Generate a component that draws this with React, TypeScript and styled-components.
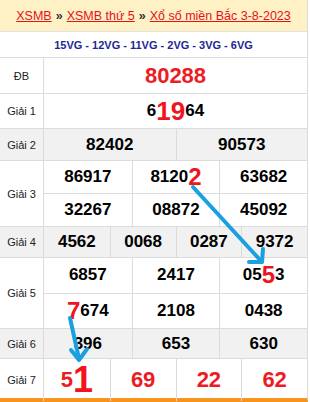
import React from "react";
import styled, { createGlobalStyle } from "styled-components";

const Global = createGlobalStyle`
  html, body { margin: 0; padding: 0; background: #fff; }
  body { font-family: "Liberation Sans", Arial, sans-serif; }
  * { box-sizing: border-box; }
`;

const Board = styled.div`
  position: relative;
  width: 308px;
  border-right: 1px solid #dcdcdc;
  border-bottom: 4px solid #f7941d;
`;

const Title = styled.div`
  height: 32px;
  background: #fdf1c5;
  border-bottom: 1px solid #e2e2e2;
  display: flex;
  align-items: center;
  justify-content: center;
  font-size: 12.5px;
  white-space: nowrap;
  color: #222;
`;

const Crumb = styled.a`
  color: #e8101c;
  text-decoration: underline;
  cursor: pointer;
`;

const Sep = styled.span`
  font-weight: bold;
  color: #333;
  margin: 0 4px;
`;

const VgRow = styled.div`
  height: 26px;
  border-bottom: 1px solid #dcdcdc;
  display: flex;
  align-items: center;
  justify-content: center;
  font-size: 11px;
  font-weight: bold;
  color: #1c2796;
`;

const Row = styled.div<{ $h: number; $shade?: boolean; $last?: boolean }>`
  display: grid;
  grid-template-columns: 44px 1fr;
  height: ${(p) => p.$h}px;
  background: ${(p) => (p.$shade ? "#f1f1f1" : "#fff")};
  border-bottom: ${(p) => (p.$last ? "none" : "1px solid #dcdcdc")};
`;

const Label = styled.div`
  border-right: 1px solid #dcdcdc;
  display: flex;
  align-items: center;
  justify-content: center;
  font-size: 11px;
  color: #222;
`;

const Stack = styled.div`
  display: flex;
  flex-direction: column;
`;

const Line = styled.div<{ $cols: number }>`
  flex: 1;
  display: grid;
  grid-template-columns: repeat(${(p) => p.$cols}, 1fr);
  & + & {
    border-top: 1px solid #dcdcdc;
  }
`;

const Cell = styled.div<{ $size?: number; $red?: boolean }>`
  display: flex;
  align-items: center;
  justify-content: center;
  font-weight: bold;
  font-size: ${(p) => p.$size ?? 17}px;
  color: ${(p) => (p.$red ? "#ec1c24" : "#000")};
  white-space: nowrap;
  & + & {
    border-left: 1px solid #dcdcdc;
  }
`;

const Hi = styled.span<{ $size: number }>`
  color: #f0141e;
  font-size: ${(p) => p.$size}px;
`;

const Overlay = styled.svg`
  position: absolute;
  left: 0;
  top: 0;
  pointer-events: none;
`;

export default function App() {
  return (
    <>
      <Global />
      <Board>
        <Title>
          <Crumb>XSMB</Crumb>
          <Sep>»</Sep>
          <Crumb>XSMB thứ 5</Crumb>
          <Sep>»</Sep>
          <Crumb>Xổ số miền Bắc 3-8-2023</Crumb>
        </Title>
        <VgRow>15VG - 12VG - 11VG - 2VG - 3VG - 6VG</VgRow>

        <Row $h={36}>
          <Label>ĐB</Label>
          <Line $cols={1}>
            <Cell $size={22} $red>80288</Cell>
          </Line>
        </Row>

        <Row $h={35}>
          <Label>Giải 1</Label>
          <Line $cols={1}>
            <Cell>
              6<Hi $size={26}>19</Hi>64
            </Cell>
          </Line>
        </Row>

        <Row $h={32} $shade>
          <Label>Giải 2</Label>
          <Line $cols={2}>
            <Cell>82402</Cell>
            <Cell>90573</Cell>
          </Line>
        </Row>

        <Row $h={66}>
          <Label>Giải 3</Label>
          <Stack>
            <Line $cols={3}>
              <Cell>86917</Cell>
              <Cell>
                8120<Hi $size={24}>2</Hi>
              </Cell>
              <Cell>63682</Cell>
            </Line>
            <Line $cols={3}>
              <Cell>32267</Cell>
              <Cell>08872</Cell>
              <Cell>45092</Cell>
            </Line>
          </Stack>
        </Row>

        <Row $h={31} $shade>
          <Label>Giải 4</Label>
          <Line $cols={4}>
            <Cell>4562</Cell>
            <Cell>0068</Cell>
            <Cell>0287</Cell>
            <Cell>9372</Cell>
          </Line>
        </Row>

        <Row $h={71}>
          <Label>Giải 5</Label>
          <Stack>
            <Line $cols={3}>
              <Cell>6857</Cell>
              <Cell>2417</Cell>
              <Cell>
                05<Hi $size={24}>5</Hi>3
              </Cell>
            </Line>
            <Line $cols={3}>
              <Cell>
                <Hi $size={24}>7</Hi>674
              </Cell>
              <Cell>2108</Cell>
              <Cell>0438</Cell>
            </Line>
          </Stack>
        </Row>

        <Row $h={30} $shade>
          <Label>Giải 6</Label>
          <Line $cols={3}>
            <Cell>396</Cell>
            <Cell>653</Cell>
            <Cell>630</Cell>
          </Line>
        </Row>

        <Row $h={39} $last>
          <Label>Giải 7</Label>
          <Line $cols={4}>
            <Cell $size={22} $red>
              5<Hi $size={36}>1</Hi>
            </Cell>
            <Cell $size={22} $red>69</Cell>
            <Cell $size={22} $red>22</Cell>
            <Cell $size={22} $red>62</Cell>
          </Line>
        </Row>

        <Overlay width="310" height="402" viewBox="0 0 310 402">
          <g
            stroke="#1a9fe0"
            strokeWidth="4"
            strokeLinecap="round"
            strokeLinejoin="round"
            fill="none"
          >
            <path d="M193 187 L261 261" />
            <path d="M249 262 L262 262 L263 249" />
            <path d="M70 318 L79 359" />
            <path d="M71 350 L79 360 L87 349" />
          </g>
        </Overlay>
      </Board>
    </>
  );
}
